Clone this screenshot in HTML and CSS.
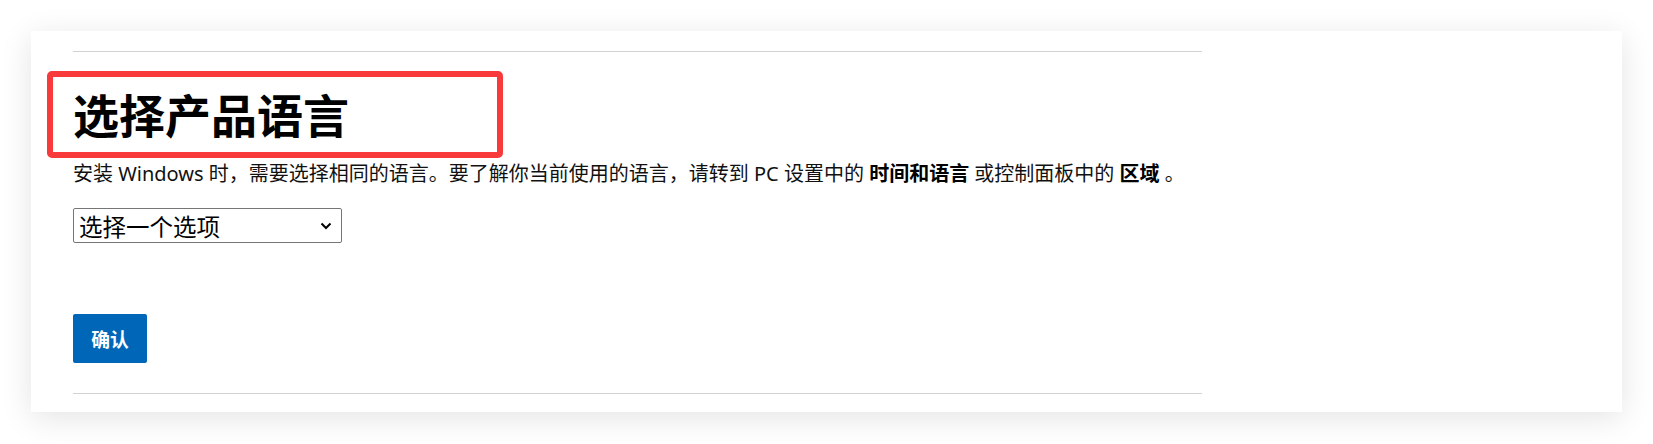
FILE: index.html
```html
<!DOCTYPE html>
<html lang="zh-CN">
<head>
      <meta charset="UTF-8">
      <meta name="viewport" content="width=device-width, initial-scale=1.0">
      <title>下载 Windows</title>
      <link rel="stylesheet" href="styles.css">
</head>
<body>
      <section class="card">
            <div class="content">
                  <hr class="rule">
                  <div class="title-wrap">
                        <h1 class="title">选择产品语言</h1>
                        <span class="highlight"></span>
                  </div>
                  <p class="intro">安装 Windows 时，需要选择相同的语言。要了解你当前使用的语言，请转到 PC 设置中的 <b>时间和语言</b> 或控制面板中的 <b>区域</b> 。</p>
                  <div class="select-wrap">
                        <select class="lang-select">
                              <option>选择一个选项</option>
                        </select>
                        <svg class="chevron" width="12" height="8" viewBox="0 0 12 8">
                              <path d="M1.5 1.5 L6 6 L10.5 1.5" fill="none" stroke="#000" stroke-width="2"/>
                        </svg>
                  </div>
                  <button class="confirm">确认</button>
                  <hr class="rule rule-bottom">
            </div>
      </section>
</body>
</html>
```

FILE: styles.css
```css
html{
      box-sizing: border-box;
}
*, *:after, *:before{
      box-sizing: inherit;
}
body{
      margin: 0;
      padding: 31px;
      background: #fff;
      font-family: "Noto Sans", "Noto Sans CJK SC", sans-serif;
      color: #111;
}
.card{
      background: #fff;
      padding: 20px 42px 18px;
      box-shadow: 0 6px 30px rgba(0, 0, 0, .11);
}
.content{
      max-width: 1129px;
}
.rule{
      margin: 0;
      height: 0;
      border: none;
      border-top: 1px solid #d2d2d2;
}
.rule-bottom{
      margin-top: 30px;
}
.title-wrap{
      position: relative;
      margin-top: 30px;
}
.title{
      margin: 0;
      font-family: "Noto Sans CJK SC", sans-serif;
      font-size: 46px;
      line-height: 62px;
      font-weight: 700;
      color: #000;
}
.highlight{
      position: absolute;
      top: -11px;
      left: -26px;
      width: 456px;
      height: 87px;
      border: 6px solid #f83a3a;
      border-radius: 5px;
}
.intro{
      margin: 16px 0 0;
      font-size: 20px;
      line-height: 28px;
}
.intro b{
      font-weight: 700;
      color: #000;
}
.select-wrap{
      position: relative;
      margin-top: 20px;
      width: 269px;
      height: 35px;
}
.lang-select{
      appearance: none;
      -webkit-appearance: none;
      width: 100%;
      height: 100%;
      margin: 0;
      padding: 0 30px 0 5px;
      border: 1px solid #767676;
      border-radius: 2px;
      background: #fff;
      font-family: "Noto Sans CJK SC", sans-serif;
      font-size: 23.5px;
      color: #000;
}
.chevron{
      position: absolute;
      top: 14px;
      right: 10px;
      pointer-events: none;
}
.confirm{
      display: block;
      margin-top: 71px;
      width: 74px;
      height: 49px;
      padding: 0;
      border: none;
      border-radius: 2px;
      background: #0067b8;
      color: #fff;
      font-family: "Noto Sans CJK SC", sans-serif;
      font-size: 18.75px;
      font-weight: 700;
}
```
